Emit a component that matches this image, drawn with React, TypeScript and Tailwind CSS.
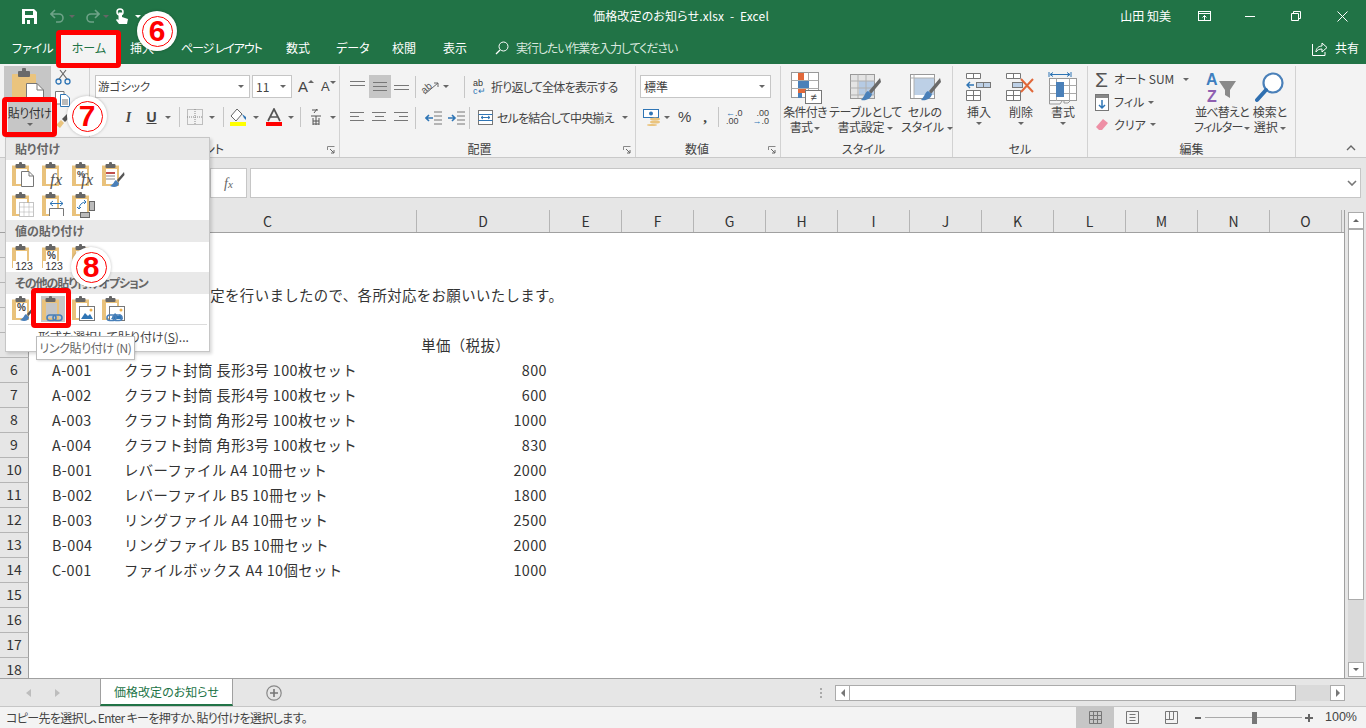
import React, { FC, ReactNode } from "react";

const UI = "font-['Noto_Sans_CJK_JP',sans-serif] [font-feature-settings:'palt']";

const Caret: FC<{ className?: string }> = ({ className = "" }) => (
  <span className={`inline-block h-0 w-0 border-x-[3px] border-t-[3px] border-x-transparent border-t-[#666] ${className}`} />
);

const Sep: FC<{ className?: string }> = ({ className = "h-[22px]" }) => <span className={`w-px bg-[#c6c6c6] ${className}`} />;

const Launcher = () => (
  <svg width="8" height="8" viewBox="0 0 8 8" className="absolute bottom-[3px] right-[4px]">
    <path d="M.5 4V.5H7.5" fill="none" stroke="#888" />
    <path d="M3 3l4 4M7 4v3H4" fill="none" stroke="#666" />
  </svg>
);

const Group: FC<{ w: string; label: string; labelPad?: string; launcher?: boolean; children: ReactNode }> = ({ w, label, labelPad = "", launcher, children }) => (
  <div className={`relative flex h-[91px] flex-col border-r border-[#d2d2d2] ${w}`}>
    <div className="h-[72px]">{children}</div>
    <div className={`mt-[3px] text-center text-[12px] leading-[16px] text-[#444] ${labelPad}`}>{label}</div>
    {launcher && <Launcher />}
  </div>
);

/* ---------- ribbon drawings ---------- */

const Lines: FC<{ rows: [number, number][]; y?: number }> = ({ rows, y = 0 }) => (
  <svg width="16" height="16" viewBox="0 0 16 16" style={{ marginTop: y }}>
    {rows.map(([x, len], i) => (
      <rect key={i} x={x} y={2 + i * 4} width={len} height="1" fill="#777" />
    ))}
  </svg>
);

const TableIcon: FC<{ kind: "cond" | "table" | "style" }> = ({ kind }) => (
  <svg width="34" height="34" viewBox="0 0 34 34">
    {kind === "cond" && (
      <>
        <rect x="2.5" y="1.5" width="27" height="25" fill="#fff" stroke="#999" />
        <path d="M2.5 9.5H29.5M2.5 17.5H29.5M10.5 1.5V27M19.5 1.5V27" stroke="#aaa" />
        <rect x="9" y="2" width="6" height="7" fill="#e1683a" />
        <rect x="9" y="10" width="11" height="7" fill="#4a80b9" />
        <rect x="9" y="18" width="8" height="4" fill="#e1683a" />
        <rect x="9" y="22" width="4" height="5" fill="#4a80b9" />
        <rect x="16.5" y="19.5" width="16" height="13" fill="#fff" stroke="#777" />
        <text x="24.5" y="30" textAnchor="middle" fontSize="11" fill="#444" fontFamily="Liberation Sans, sans-serif">≠</text>
      </>
    )}
    {kind === "table" && (
      <>
        <rect x="2.5" y="3.5" width="24" height="24" fill="#e4e4e4" stroke="#999" />
        <rect x="11" y="10" width="15" height="14" fill="#b6cbe4" />
        <path d="M2.5 10H27M2.5 17H27M2.5 24H27M10 3.5V27M18 3.5V27" stroke="#b0b0b0" />
        <path d="M32 7L21 20l2 3L33 11z" fill="#6a6a6a" />
        <path d="M20 20c-3 1-3 5-7 9 5 1 10-1 11-6z" fill="#4a80b9" />
      </>
    )}
    {kind === "style" && (
      <>
        <rect x="2.5" y="3.5" width="24" height="24" fill="#fff" stroke="#999" />
        <rect x="6" y="7" width="20" height="17" fill="#bdd0e6" />
        <path d="M2.5 7H27M6 3.5V27" stroke="#b0b0b0" />
        <path d="M32 7L21 20l2 3L33 11z" fill="#6a6a6a" />
        <path d="M20 20c-3 1-3 5-7 9 5 1 10-1 11-6z" fill="#4a80b9" />
      </>
    )}
  </svg>
);

const InsertIcon = () => (
  <svg width="28" height="30" viewBox="0 0 28 30">
    <path d="M1.5 2.5H15.5V7.5H1.5zM8.5 2.5V7.5M1.5 19.5H15.5V29.5H1.5zM1.5 24.5H15.5M8.5 19.5V29.5" fill="#fff" stroke="#777" />
    <rect x="11.5" y="11.5" width="14" height="5" fill="#bdd0e6" stroke="#777" />
    <path d="M18.5 11.5V16.5" stroke="#777" />
    <path d="M9 14H2M5 11l-3 3 3 3" fill="none" stroke="#2f75b5" strokeWidth="1.4" />
  </svg>
);

const DeleteIcon = () => (
  <svg width="32" height="30" viewBox="0 0 32 30">
    <path d="M1.5 2.5H15.5V7.5H1.5zM8.5 2.5V7.5M1.5 19.5H15.5V29.5H1.5zM1.5 24.5H15.5M8.5 19.5V29.5" fill="#fff" stroke="#777" />
    <rect x="7.5" y="11.5" width="10" height="5" fill="#bdd0e6" stroke="#777" />
    <path d="M16 8l12 13M28 8L16 21" stroke="#e1683a" strokeWidth="2" />
  </svg>
);

const FormatIcon = () => (
  <svg width="30" height="34" viewBox="0 0 30 34">
    <path d="M1 1V6M23 1V6M2 3.5H22M2 3.5l3-2M2 3.5l3 2M22 3.5l-3-2M22 3.5l-3 2" fill="none" stroke="#2f75b5" />
    <rect x="1.5" y="7.5" width="27" height="22" fill="#fff" stroke="#999" />
    <path d="M1.5 14.5H28.5M1.5 22.5H28.5M8.5 7.5V30M21.5 7.5V30" stroke="#aaa" />
    <rect x="8" y="11" width="8" height="15" fill="#4a80b9" />
    <path d="M1.5 30v3H12l2-3M16 30v2h4l2-2" fill="none" stroke="#999" />
  </svg>
);

const SortIcon = () => (
  <svg width="34" height="32" viewBox="0 0 34 32">
    <text x="1" y="14" fontSize="16" fontWeight="700" fill="#3f7fbf" fontFamily="Liberation Sans, sans-serif">A</text>
    <text x="2" y="31" fontSize="16" fontWeight="700" fill="#8e5fb0" fontFamily="Liberation Sans, sans-serif">Z</text>
    <path d="M14 10H31L25 19V27L20 24V19z" fill="#8a8a8a" />
  </svg>
);

const FindIcon = () => (
  <svg width="30" height="32" viewBox="0 0 30 32">
    <circle cx="18" cy="12" r="9.5" fill="#fff" stroke="#4a80b9" strokeWidth="2.2" />
    <path d="M11 19L2 29" stroke="#2f6fb0" strokeWidth="4" strokeLinecap="round" />
  </svg>
);

const PasteLarge = () => (
  <svg width="34" height="34" viewBox="0 0 34 34">
    <rect x="1" y="6" width="24" height="27" rx="1" fill="#eac47e" />
    <rect x="7" y="3" width="12" height="6" rx="1" fill="#6a6a6a" />
    <rect x="11" y="0" width="4" height="4" rx="1" fill="#6a6a6a" />
    <path d="M15.5 15.5H26l6.5 6.5V33.5H15.5z" fill="#fff" stroke="#777" />
    <path d="M26 15.5V22H32.5" fill="none" stroke="#777" />
  </svg>
);

/* ---------- paste menu drawings ---------- */

// tan frame with a pale inside, the clip sits on top
const Board: FC<{ children?: ReactNode; inner?: string }> = ({ children, inner = "#fff" }) => (
  <svg width="24" height="26" viewBox="0 0 24 26" className="overflow-visible">
    <path d="M1 3.5H18V24H1z" fill="#e9c27c" />
    <rect x="5" y="7" width="11" height="15" fill={inner} />
    <rect x="4.5" y="2" width="10" height="4" rx="1" fill="#666" />
    <rect x="8" y="0" width="3" height="3" rx="1" fill="#666" />
    {children}
  </svg>
);

const Brush = () => (
  <>
    <path d="M23 10l-7 8 1.5 2 6-7z" fill="#555" />
    <path d="M15 18c-2 1-2 4-6 6 4 2 9 1 9-3z" fill="#4a80b9" />
  </>
);

const Fx: FC<{ x?: number }> = ({ x = 9 }) => (
  <text x={x} y="23" fontSize="17" fontStyle="italic" fill="#555" fontFamily="Liberation Serif, serif">fx</text>
);

const Pic = () => (
  <>
    <rect x="8.5" y="10.5" width="15" height="14" fill="#fff" stroke="#777" />
    <path d="M10 23l4-6 3 3 2-2 3 5z" fill="#2f75b5" />
    <circle cx="20" cy="14" r="1.5" fill="#eeb04a" />
  </>
);

const Link = () => (
  <g fill="none" stroke="#4a80b9" strokeWidth="1.6">
    <rect x="6" y="19" width="9" height="5.5" rx="2.7" />
    <rect x="12" y="19" width="9" height="5.5" rx="2.7" />
  </g>
);

const Num: FC<{ pct?: boolean }> = ({ pct }) => (
  <>
    {pct && <text x="6" y="15" fontSize="10" fontWeight="700" fill="#444" fontFamily="Liberation Sans, sans-serif">%</text>}
    <rect x="2" y="17" width="22" height="9" fill="#fff" />
    <text x="13" y="26" textAnchor="middle" fontSize="10.5" fill="#333" fontFamily="Liberation Sans, sans-serif">123</text>
  </>
);

const MenuHead: FC<{ children: ReactNode; tight?: boolean }> = ({ children, tight }) => (
  <div className={`flex h-[22px] items-center whitespace-nowrap bg-[#e9e9e9] pl-[9px] text-[12px] font-bold text-[#666] ${tight ? "tracking-[-1px]" : ""}`}>{children}</div>
);

const IconRow: FC<{ children: ReactNode }> = ({ children }) => (
  <div className="flex h-[30px] items-center gap-[6px] pl-[5px]">{children}</div>
);

const PasteMenu = () => (
  <div className="absolute left-[5px] top-[137px] z-20 h-[215px] w-[205px] border border-[#c6c6c6] bg-white shadow-[2px_2px_3px_rgba(0,0,0,.15)]">
    <MenuHead>貼り付け</MenuHead>
    <IconRow>
      <Board>
        <path d="M10.5 9.5H18l4.5 4.5V24.5H10.5z" fill="#fff" stroke="#777" />
        <path d="M18 9.5V14H22.5" fill="none" stroke="#777" />
      </Board>
      <Board><Fx /></Board>
      <Board>
        <text x="6" y="15" fontSize="9" fontWeight="700" fill="#444" fontFamily="Liberation Sans, sans-serif">%</text>
        <Fx x={10} />
      </Board>
      <Board>
        <rect x="5" y="10" width="9" height="2" fill="#c0504d" />
        <path d="M5 14H14M5 17H14" stroke="#888" />
        <Brush />
      </Board>
    </IconRow>
    <IconRow>
      <Board>
        <rect x="8.5" y="10.5" width="14" height="14" fill="#fff" stroke="#888" strokeDasharray="1 1" />
        <path d="M8.5 15H22.5M8.5 20H22.5M13 10.5V24.5M18 10.5V24.5" stroke="#aaa" strokeDasharray="1 1" />
      </Board>
      <Board>
        <path d="M8.5 24V16.5H22.5V24" fill="#fff" stroke="#777" />
        <path d="M9 11.5H22M9 11.5l3-2.5M9 11.5l3 2.5M22 11.5l-3-2.5M22 11.5l-3 2.5" fill="none" stroke="#2f75b5" />
      </Board>
      <Board>
        <rect x="18.5" y="9.5" width="5" height="9" fill="#bbb" stroke="#666" />
        <rect x="9.5" y="20.5" width="9" height="5" fill="#bbb" stroke="#666" />
        <path d="M8 17c0-4 3-7 7-7M8 17l-2-2M8 17l2-2M15 10l-2-2M15 10l-2 2" fill="none" stroke="#2f75b5" />
      </Board>
    </IconRow>
    <MenuHead>値の貼り付け</MenuHead>
    <IconRow>
      <Board><Num /></Board>
      <Board><Num pct /></Board>
      <Board><Num /></Board>
    </IconRow>
    <MenuHead tight>その他の貼り付けオプション</MenuHead>
    <IconRow>
      <Board>
        <text x="6" y="15" fontSize="10" fontWeight="700" fill="#444" fontFamily="Liberation Sans, sans-serif">%</text>
        <Brush />
      </Board>
      <span className="flex h-[26px] w-[24px] bg-[#c6c6c6]">
        <Board inner="#c6c6c6"><Link /></Board>
      </span>
      <Board><Pic /></Board>
      <Board>
        <Pic />
        <Link />
      </Board>
    </IconRow>
    <div className="mx-[2px] h-px bg-[#dcdcdc]" />
    <div className="mt-[4px] pl-[32px] text-[12px] leading-[16px] text-[#444]">
      形式を選択して貼り付け(<span className="underline">S</span>)...
    </div>
  </div>
);

/* ---------- overlays ---------- */

const Callout: FC<{ n: string; pos: string }> = ({ n, pos }) => (
  <div className={`absolute z-40 flex h-[40px] w-[40px] items-center justify-center rounded-full bg-white shadow-[0_0_3px_rgba(0,0,0,.25)] ${pos}`}>
    <div className="flex h-[31px] w-[31px] items-center justify-center rounded-full border border-[#f00] font-['Liberation_Sans',sans-serif] text-[30px] font-bold leading-none text-[#f00]">
      {n}
    </div>
  </div>
);

/* ---------- sheet data ---------- */

const ROWS: Record<number, [string, string, string]> = {
  5: ["", "", "単価（税抜）"],
  6: ["A-001", "クラフト封筒 長形3号 100枚セット", "800"],
  7: ["A-002", "クラフト封筒 長形4号 100枚セット", "600"],
  8: ["A-003", "クラフト封筒 角形2号 100枚セット", "1000"],
  9: ["A-004", "クラフト封筒 角形3号 100枚セット", "830"],
  10: ["B-001", "レバーファイル A4 10冊セット", "2000"],
  11: ["B-002", "レバーファイル B5 10冊セット", "1800"],
  12: ["B-003", "リングファイル A4 10冊セット", "2500"],
  13: ["B-004", "リングファイル B5 10冊セット", "2000"],
  14: ["C-001", "ファイルボックス A4 10個セット", "1000"],
};

const COLS = ["E", "F", "G", "H", "I", "J", "K", "L", "M", "N", "O"];
const ROW_NOS = Array.from({ length: 18 }, (_, i) => i + 1);
const TABS = [
  ["挿入", "w-[62px] pl-[11px]"],
  ["ページ レイアウト", "w-[105px] tracking-[-1.1px]"],
  ["数式", "w-[50px]"],
  ["データ", "w-[56px]"],
  ["校閲", "w-[51px]"],
  ["表示", "w-[52px]"],
];

export default function App() {
  return (
    <div className={`relative flex h-[728px] w-[1366px] flex-col overflow-hidden bg-white ${UI}`}>
      {/* title bar */}
      <div className="grid h-[32px] grid-cols-[1fr_auto_1fr] items-center bg-[#217346] text-white">
        <div className="flex items-center pl-[22px]">
          <svg width="15" height="15" viewBox="0 0 15 15">
            <path d="M0 0H12L15 3V15H0z" fill="#fff" />
            <rect x="3" y="2" width="8" height="4" fill="#217346" />
            <rect x="3" y="9" width="9" height="6" fill="#217346" />
            <rect x="5" y="11" width="3" height="4" fill="#fff" />
          </svg>
          <svg width="16" height="14" viewBox="0 0 16 14" className="ml-[13px]">
            <path d="M5 1L1 5l4 4M1 5h8a4 4 0 010 8H6" fill="none" stroke="#6ea388" strokeWidth="1.6" />
          </svg>
          <Caret className="ml-[3px] border-t-[#6ea388]" />
          <svg width="16" height="14" viewBox="0 0 16 14" className="ml-[9px]">
            <path d="M11 1l4 4-4 4M15 5H7a4 4 0 000 8h3" fill="none" stroke="#6ea388" strokeWidth="1.6" />
          </svg>
          <Caret className="ml-[3px] border-t-[#6ea388]" />
          <svg width="14" height="17" viewBox="0 0 14 17" className="ml-[6px]">
            <circle cx="5" cy="4" r="3" fill="none" stroke="#fff" strokeWidth="1.5" />
            <path d="M3.5 4.5V12L2 11l-1 1 3 4h8l1-5-6-2V4.5z" fill="#fff" />
          </svg>
          <Caret className="ml-[6px] border-t-white" />
        </div>
        <div className="mr-[4px] whitespace-pre text-[12px] leading-none tracking-[0.15px]">価格改定のお知らせ.xlsx  -  Excel</div>
        <div className="flex items-center justify-end">
          <span className="mr-[27px] text-[12px]">山田 知美</span>
          <svg width="14" height="11" viewBox="0 0 14 11" className="mr-[33px]">
            <rect x=".5" y=".5" width="12" height="9" fill="none" stroke="#fff" />
            <path d="M1 2.5H12M6.5 9V4.5M4.5 6.5l2-2 2 2" fill="none" stroke="#fff" />
          </svg>
          <span className="mr-[36px] h-px w-[10px] bg-white" />
          <svg width="10" height="10" viewBox="0 0 10 10" className="mr-[36px]">
            <path d="M.5 2.5H7.5V9.5H.5zM2.5 2.5V.5H9.5V7.5H7.5" fill="none" stroke="#fff" />
          </svg>
          <svg width="11" height="11" viewBox="0 0 11 11" className="mr-[18px]">
            <path d="M.5.5l10 10M10.5.5l-10 10" stroke="#fff" />
          </svg>
        </div>
      </div>

      {/* tabs */}
      <div className="flex h-[32px] items-center bg-[#217346] text-[12px] text-white">
        <span className="w-[59px] pl-[12px]">ファイル</span>
        <span className="flex h-full w-[60px] items-center justify-center bg-[#f3f3f3] text-[#217346]">ホーム</span>
        {TABS.map(([t, w]) => (
          <span key={t} className={`${w} whitespace-nowrap`}>{t}</span>
        ))}
        <svg width="14" height="14" viewBox="0 0 14 14">
          <circle cx="8.5" cy="5.5" r="4.5" fill="none" stroke="#fff" />
          <path d="M5 9l-4 4" stroke="#fff" strokeWidth="1.3" />
        </svg>
        <span className="ml-[7px] whitespace-nowrap tracking-[-1.1px] text-[#d9e8df]">実行したい作業を入力してください</span>
        <div className="ml-auto flex items-center pr-[7px]">
          <svg width="16" height="15" viewBox="0 0 16 15" className="mr-[7px]">
            <path d="M.5 3V14.5H13V11" fill="none" stroke="#fff" />
            <path d="M4 11c0-4 3-6 6-6V2l5 4.5L10 11V8c-3 0-5 1-6 3z" fill="none" stroke="#fff" />
          </svg>
          <span>共有</span>
        </div>
      </div>

      {/* ribbon */}
      <div className="flex h-[94px] shrink-0 border-b border-[#c9c9c9] bg-[#f3f3f3] pt-[2px] text-[12px] text-[#444]">
        <Group w="w-[90px]" label="">
          <div className="flex pl-[4px]">
            <div className="flex h-[34px] w-[47px] items-start justify-center bg-[#c6c6c6] pt-[2px]"><PasteLarge /></div>
            <div className="ml-[4px] flex flex-col gap-[6px] pt-[3px]">
              <svg width="16" height="16" viewBox="0 0 16 16">
                <circle cx="3.5" cy="12.5" r="2.5" fill="none" stroke="#2f75b5" strokeWidth="1.3" />
                <circle cx="12.5" cy="12.5" r="2.5" fill="none" stroke="#2f75b5" strokeWidth="1.3" />
                <path d="M4 10L11 1M12 10L5 1" stroke="#666" strokeWidth="1.2" />
              </svg>
              <svg width="15" height="16" viewBox="0 0 15 16">
                <path d="M.5.5H9V13H.5z" fill="#fff" stroke="#777" />
                <path d="M5.5 3.5H11l3.5 3.5V15.5H5.5z" fill="#fff" stroke="#2f75b5" />
                <path d="M7 9H13M7 11H13M7 13H13" stroke="#777" />
              </svg>
              <svg width="16" height="16" viewBox="0 0 16 16">
                <path d="M1 12l5-5 3 3-4 5z" fill="#eac47e" />
                <path d="M7 6l5-5 3 3-5 5z" fill="#555" />
              </svg>
            </div>
          </div>
        </Group>

        <Group w="w-[250px]" label="フォント" labelPad="pr-[20px]" launcher>
          <div className="flex items-center pl-[5px] pt-[9px]">
            <div className="flex h-[23px] w-[155px] items-center justify-between border border-[#c6c6c6] bg-white px-[2px] text-[11.5px]">
              游ゴシック<Caret className="mr-[3px]" />
            </div>
            <div className="ml-[2px] flex h-[23px] w-[40px] items-center justify-between border border-[#c6c6c6] bg-white px-[3px] text-[12px]">
              11<Caret className="mr-[2px]" />
            </div>
            <span className="ml-[6px] flex w-[16px] items-start font-['Liberation_Sans',sans-serif] text-[15px] leading-none">
              A<Caret className="mt-[1px] rotate-180 border-t-[#2f75b5]" />
            </span>
            <span className="ml-[7px] flex w-[16px] items-start font-['Liberation_Sans',sans-serif] text-[13px] leading-none">
              A<Caret className="mt-[1px] border-t-[#2f75b5]" />
            </span>
          </div>
          <div className="mt-[8px] flex h-[22px] items-center pl-[27px] font-['Liberation_Serif',serif] text-[14px] text-[#444]">
            <i className="w-[23px] text-center font-semibold">I</i>
            <span className="w-[23px] text-center font-['Liberation_Sans',sans-serif] font-bold underline">U</span>
            <Caret className="ml-[2px]" />
            <Sep className="ml-[8px] h-[20px]" />
            <svg width="16" height="16" viewBox="0 0 16 16" className="ml-[7px]">
              <rect x=".5" y=".5" width="15" height="15" fill="none" stroke="#888" strokeDasharray="1 1" />
              <path d="M0 8H16M8 0V16" stroke="#888" strokeDasharray="1 1" />
            </svg>
            <Caret className="ml-[6px]" />
            <Sep className="ml-[8px] h-[20px]" />
            <svg width="18" height="18" viewBox="0 0 18 18" className="ml-[6px]">
              <path d="M7 1L1 8l5 5 6-7z" fill="#fff" stroke="#666" />
              <path d="M12 6l4 3v3l-2-2z" fill="#2f75b5" />
              <rect x="0" y="14" width="16" height="4" fill="#ffff00" />
            </svg>
            <Caret className="ml-[5px]" />
            <svg width="16" height="18" viewBox="0 0 16 18" className="ml-[7px]">
              <path d="M2 13L8 1l6 12M4.5 9H11.5" fill="none" stroke="#555" strokeWidth="1.7" />
              <rect x="0" y="14" width="16" height="4" fill="#ff0000" />
            </svg>
            <Caret className="ml-[6px]" />
            <Sep className="ml-[6px] h-[20px]" />
            <svg width="12" height="18" viewBox="0 0 12 18" className="ml-[9px]">
              <path d="M2 2h6M7 1L4 5M1 8h10M3 10v7M9 10v7M3 13h6M3 16h6M6 8v9" fill="none" stroke="#555" />
            </svg>
            <Caret className="ml-[8px]" />
          </div>
        </Group>

        <Group w="w-[296px]" label="配置" labelPad="pr-[16px]" launcher>
          <div className="box-content flex h-[23px] items-center pl-[7px] pt-[9px]">
            <span className="flex w-[22px] justify-center"><Lines rows={[[0, 15], [0, 15]]} /></span>
            <span className="flex h-[23px] w-[22px] items-center justify-center bg-[#c6c6c6]"><Lines rows={[[1, 14], [1, 14], [1, 14]]} y={2} /></span>
            <span className="flex w-[22px] justify-center"><Lines rows={[[0, 15], [0, 15]]} y={8} /></span>
            <Sep className="ml-[2px] h-[22px]" />
            <svg width="18" height="18" viewBox="0 0 18 18" className="ml-[5px]">
              <text x="0" y="13" fontSize="10" fill="#555" transform="rotate(-40 6 10)" fontFamily="Liberation Sans, sans-serif">ab</text>
              <path d="M4 16L17 5M17 5h-4M17 5v4" fill="none" stroke="#666" />
            </svg>
            <Caret className="ml-[4px]" />
            <Sep className="ml-[15px] h-[22px]" />
            <span className="ml-[8px] flex w-[18px] flex-col font-['Liberation_Sans',sans-serif] text-[9px] leading-[8px] text-[#333]">
              <span>ab</span><span className="text-[#2f75b5]">c↵</span>
            </span>
            <span className="whitespace-nowrap tracking-[-0.75px]">折り返して全体を表示する</span>
          </div>
          <div className="mt-[8px] flex h-[23px] items-center pl-[7px]">
            <span className="flex w-[22px] justify-center"><Lines rows={[[0, 14], [0, 9], [0, 14]]} /></span>
            <span className="flex w-[22px] justify-center"><Lines rows={[[0, 14], [3, 9], [0, 14]]} /></span>
            <span className="flex w-[22px] justify-center"><Lines rows={[[0, 14], [5, 9], [0, 14]]} /></span>
            <Sep className="ml-[2px] h-[22px]" />
            <svg width="17" height="14" viewBox="0 0 17 14" className="ml-[9px]">
              <path d="M9 1H17M9 5H17M9 9H17M9 13H17M0 1H0" stroke="#777" />
              <path d="M8 7H1M4 4L1 7l3 3" fill="none" stroke="#2f75b5" strokeWidth="1.6" />
            </svg>
            <svg width="17" height="14" viewBox="0 0 17 14" className="ml-[6px]">
              <path d="M9 1H17M9 5H17M9 9H17M9 13H17" stroke="#777" />
              <path d="M0 7H7M4 4l3 3-3 3" fill="none" stroke="#2f75b5" strokeWidth="1.6" />
            </svg>
            <Sep className="ml-[4px] h-[22px]" />
            <svg width="16" height="16" viewBox="0 0 16 16" className="ml-[8px]">
              <rect x=".5" y=".5" width="14" height="14" fill="#fff" stroke="#777" />
              <path d="M.5 4.5H14.5M.5 10.5H14.5M3 7.5H12M3 7.5l2-1.5M3 7.5l2 1.5M12 7.5l-2-1.5M12 7.5l-2 1.5" fill="none" stroke="#2f75b5" />
            </svg>
            <span className="ml-[3px] whitespace-nowrap tracking-[-0.8px]">セルを結合して中央揃え</span>
            <Caret className="ml-[8px]" />
          </div>
        </Group>

        <Group w="w-[145px]" label="数値" labelPad="pr-[22px]" launcher>
          <div className="pl-[4px] pt-[9px]">
            <div className="flex h-[23px] w-[131px] items-center justify-between border border-[#c6c6c6] bg-white px-[3px]">
              標準<Caret className="mr-[2px]" />
            </div>
          </div>
          <div className="mt-[8px] flex h-[22px] items-center pl-[7px]">
            <svg width="18" height="18" viewBox="0 0 18 18">
              <rect x=".5" y="1.5" width="15" height="8" fill="#fff" stroke="#2f75b5" />
              <circle cx="8" cy="5.5" r="2" fill="#2f75b5" />
              <ellipse cx="12" cy="11" rx="5" ry="1.5" fill="#eac47e" />
              <ellipse cx="12" cy="14" rx="5" ry="1.5" fill="#eac47e" />
              <ellipse cx="9" cy="17" rx="5" ry="1" fill="#eac47e" />
            </svg>
            <Caret className="ml-[3px]" />
            <span className="ml-[8px] font-['Liberation_Sans',sans-serif] text-[15px]">%</span>
            <span className="ml-[12px] font-['Liberation_Serif',serif] text-[15px] font-bold leading-none">,</span>
            <Sep className="ml-[11px] h-[20px]" />
            <span className="ml-[7px] w-[20px] font-['Liberation_Sans',sans-serif] text-[9px] leading-[8px]">
              <span className="text-[#2f75b5]">←</span>.0<br />.00
            </span>
            <span className="ml-[3px] w-[20px] text-right font-['Liberation_Sans',sans-serif] text-[9px] leading-[8px]">
              .00<br /><span className="text-[#2f75b5]">→</span>.0
            </span>
          </div>
        </Group>

        <Group w="w-[172px]" label="スタイル" labelPad="pr-[6px]">
          <div className="flex pt-[5px] text-center leading-[15px]">
            <div className="w-[48px]">
              <div className="flex h-[33px] justify-center pl-[2px]"><TableIcon kind="cond" /></div>
              <div className="whitespace-nowrap tracking-[-0.7px]">条件付き<br />書式 <Caret className="align-middle" /></div>
            </div>
            <div className="w-[72px]">
              <div className="flex h-[33px] justify-center"><TableIcon kind="table" /></div>
              <div className="whitespace-nowrap tracking-[-0.3px]">テーブルとして<br />書式設定 <Caret className="align-middle" /></div>
            </div>
            <div className="w-[48px]">
              <div className="flex h-[33px] justify-center"><TableIcon kind="style" /></div>
              <div className="whitespace-nowrap">セルの<br />スタイル <Caret className="align-middle" /></div>
            </div>
          </div>
        </Group>

        <Group w="w-[135px]" label="セル">
          <div className="flex pl-[5px] pt-[5px] text-center leading-[15px]">
            {[
              ["挿入", <InsertIcon key="i" />],
              ["削除", <DeleteIcon key="d" />],
              ["書式", <FormatIcon key="f" />],
            ].map(([t, icon]) => (
              <div key={t as string} className="w-[42px]">
                <div className="flex h-[33px] justify-center">{icon}</div>
                <div>{t}</div>
                <div className="mt-[3px] flex justify-center"><Caret className="align-top" /></div>
              </div>
            ))}
          </div>
        </Group>

        <Group w="w-[208px]" label="編集">
          <div className="flex">
            <div className="w-[106px] pl-[7px] pt-[1px]">
              <div className="flex h-[24px] items-center">
                <span className="w-[19px] font-['Liberation_Sans',sans-serif] text-[21px] leading-none text-[#555]">Σ</span>
                オート SUM<Caret className="ml-[9px]" />
              </div>
              <div className="flex h-[22px] items-center">
                <svg width="14" height="17" viewBox="0 0 14 17" className="mr-[5px]">
                  <rect x=".5" y=".5" width="13" height="16" fill="#fff" stroke="#777" />
                  <rect x="1" y="1" width="12" height="3" fill="#888" />
                  <path d="M7 6v8M4 11l3 3 3-3" fill="none" stroke="#2f75b5" strokeWidth="1.5" />
                </svg>
                フィル<Caret className="ml-[4px]" />
              </div>
              <div className="flex h-[23px] items-center">
                <svg width="14" height="14" viewBox="0 0 14 14" className="mr-[5px]">
                  <path d="M8 1l5 4-6 7H4L1 9z" fill="#ee8fa5" />
                </svg>
                クリア<Caret className="ml-[4px]" />
              </div>
            </div>
            <div className="flex pt-[5px] text-center leading-[15px]">
              <div className="w-[56px]">
                <div className="flex h-[33px] justify-center"><SortIcon /></div>
                <div className="whitespace-nowrap tracking-[-0.8px]">並べ替えと<br />フィルター <Caret className="align-middle" /></div>
              </div>
              <div className="w-[40px]">
                <div className="flex h-[33px] justify-center"><FindIcon /></div>
                <div className="whitespace-nowrap">検索と<br />選択 <Caret className="align-middle" /></div>
              </div>
            </div>
          </div>
        </Group>

        <div className="relative flex-1">
          <svg width="10" height="6" viewBox="0 0 10 6" className="absolute bottom-[6px] right-[10px]">
            <path d="M1 5l4-4 4 4" fill="none" stroke="#666" strokeWidth="1.4" />
          </svg>
        </div>
      </div>

      {/* formula bar */}
      <div className="flex h-[52px] shrink-0 items-center bg-[#e6e6e6] pb-[12px] pt-[10px]">
        <div className="ml-[210px] flex h-[30px] w-[37px] items-center justify-center border border-[#c6c6c6] bg-white font-['Liberation_Serif',serif] text-[14px] italic text-[#666]">
          <span>f<span className="text-[11px]">x</span></span>
        </div>
        <div className="ml-[3px] flex h-[30px] w-[1111px] items-center justify-end border border-[#c6c6c6] bg-white pr-[3px]">
          <svg width="10" height="6" viewBox="0 0 10 6">
            <path d="M1 1l4 4 4-4" fill="none" stroke="#777" strokeWidth="1.6" />
          </svg>
        </div>
      </div>

      {/* sheet */}
      <div className="flex h-[468px] shrink-0 bg-[#e6e6e6] font-['Noto_Sans_CJK_JP',sans-serif] [font-feature-settings:normal]">
        <div className="w-[1345px] shrink-0 border-r border-[#a0a0a0]">
          <div className="flex h-[23px] border-b border-[#a0a0a0] text-[14px] leading-[22px] text-[#333]">
            <span className="w-[29px] shrink-0" />
            <span className="w-[15px] shrink-0" />
            <span className="w-[73px] shrink-0 border-r border-[#b5b5b5] text-center">B</span>
            <span className="w-[300px] shrink-0 border-r border-[#b5b5b5] pl-[2px] text-center">C</span>
            <span className="w-[133px] shrink-0 border-r border-[#b5b5b5] text-center">D</span>
            {COLS.map((c) => (
              <span key={c} className="w-[72px] shrink-0 border-r border-[#b5b5b5] text-center">{c}</span>
            ))}
          </div>
          <div className="h-[445px] overflow-hidden bg-white">
            {ROW_NOS.map((n) => {
              const row = ROWS[n];
              return (
                <div key={n} className="flex h-[25px] text-[14.4px] leading-[23px] tracking-[0.4px] text-[#333]">
                  <span className="w-[29px] shrink-0 border-b border-r border-[#b5b5b5] border-r-[#a0a0a0] bg-[#e6e6e6] text-center text-[14px] leading-[23px] tracking-normal">{n}</span>
                  {n === 3 ? (
                    <span className="whitespace-nowrap pl-[19px]">下記商品について価格改定を行いましたので、各所対応をお願いいたします。</span>
                  ) : row ? (
                    <>
                      <span className="w-[95px] shrink-0 pl-[23px]">{row[0]}</span>
                      <span className="w-[293px] shrink-0 whitespace-nowrap">{row[1]}</span>
                      <span className={`w-[133px] shrink-0 text-right ${n === 5 ? "pr-[40px]" : "pr-[3px]"}`}>{row[2]}</span>
                    </>
                  ) : null}
                </div>
              );
            })}
          </div>
        </div>
        <div className="flex w-[21px] flex-col items-center pb-[1px] pt-[2px]">
          <div className="flex h-[17px] w-[16px] items-center justify-center border border-[#ababab] bg-white">
            <Caret className="rotate-180" />
          </div>
          <div className="h-[371px] w-[16px] border border-[#ababab] bg-white" />
          <div className="w-[16px] flex-1 bg-[#dadada]" />
          <div className="flex h-[15px] w-[16px] items-center justify-center border border-[#ababab] bg-white">
            <Caret />
          </div>
        </div>
      </div>

      {/* sheet tabs */}
      <div className="flex h-[28px] shrink-0 items-center border-t border-[#a0a0a0] bg-[#e6e6e6] text-[#b5b5b5]">
        <span className="ml-[26px] h-0 w-0 border-y-[4px] border-r-[5px] border-y-transparent border-r-[#bdbdbd]" />
        <span className="ml-[24px] h-0 w-0 border-y-[4px] border-l-[5px] border-y-transparent border-l-[#bdbdbd]" />
        <div className="ml-[40px] mt-[-1px] flex h-[27px] w-[133px] items-center justify-center border-x border-b-[2px] border-x-[#a0a0a0] border-b-[#217346] bg-white pt-[1px] text-[12px] text-[#217346]">
          価格改定のお知らせ
        </div>
        <svg width="16" height="16" viewBox="0 0 16 16" className="ml-[33px]">
          <circle cx="8" cy="8" r="7.2" fill="none" stroke="#888" strokeWidth="1.2" />
          <path d="M8 4V12M4 8H12" stroke="#777" strokeWidth="1.6" />
        </svg>
        <span className="ml-[538px] flex flex-col gap-[2px]">
          <i className="h-[2px] w-[2px] bg-[#aaa]" />
          <i className="h-[2px] w-[2px] bg-[#aaa]" />
          <i className="h-[2px] w-[2px] bg-[#aaa]" />
        </span>
        <div className="ml-[13px] flex h-[16px] w-[510px] items-stretch">
          <span className="flex w-[15px] items-center justify-center border border-[#ababab] bg-white">
            <span className="h-0 w-0 border-y-[4px] border-r-[4px] border-y-transparent border-r-[#777]" />
          </span>
          <span className="w-[446px] border-y border-r border-[#ababab] bg-white" />
          <span className="flex-1 bg-[#dadada]" />
          <span className="flex w-[15px] items-center justify-center border border-[#ababab] bg-white">
            <span className="h-0 w-0 border-y-[4px] border-l-[4px] border-y-transparent border-l-[#777]" />
          </span>
        </div>
      </div>

      {/* status bar */}
      <div className="flex h-[22px] shrink-0 items-center border-t border-[#c6c6c6] bg-[#f3f3f3] text-[12px] text-[#444]">
        <span className="ml-[6px] whitespace-nowrap tracking-[-0.65px]">コピー先を選択し、Enter キーを押すか、貼り付けを選択します。</span>
        <div className="ml-auto flex h-full items-center">
          <span className="flex h-full w-[38px] items-center justify-center bg-[#c6c6c6]">
            <svg width="13" height="13" viewBox="0 0 13 13">
              <path d="M.5.5H12.5V12.5H.5zM.5 4.5H12.5M.5 8.5H12.5M4.5.5V12.5M8.5.5V12.5" fill="none" stroke="#777" />
            </svg>
          </span>
          <svg width="13" height="13" viewBox="0 0 13 13" className="ml-[12px]">
            <path d="M.5.5H12.5V12.5H.5zM3.5 3.5H9.5M3.5 6.5H9.5M3.5 9.5H9.5" fill="none" stroke="#777" />
          </svg>
          <svg width="13" height="13" viewBox="0 0 13 13" className="ml-[26px]">
            <path d="M.5.5H12.5V12.5H.5zM.5 8.5H8.5V.5M4.5.5V8.5" fill="none" stroke="#777" />
          </svg>
          <span className="ml-[17px] h-[2px] w-[6px] bg-[#666]" />
          <span className="relative ml-[4px] flex h-[1px] w-[97px] items-center bg-[#aaa]">
            <i className="absolute left-[47px] h-[12px] w-[5px] bg-[#777]" />
          </span>
          <svg width="8" height="8" viewBox="0 0 8 8" className="ml-[3px]">
            <path d="M0 4H8M4 0V8" stroke="#666" strokeWidth="2" />
          </svg>
          <span className="ml-[12px] mr-[9px] font-['Liberation_Sans',sans-serif] text-[12.5px]">100%</span>
        </div>
      </div>

      {/* paste menu and annotations */}
      <div className="absolute left-[8px] top-[100px] z-10 flex h-[33px] w-[43px] flex-col items-center bg-[#c6c6c6] pt-[5px] text-[12px] leading-[16px] text-[#333]">
        <span className="whitespace-nowrap tracking-[-0.5px]">貼り付け</span>
        <Caret className="mt-[2px]" />
      </div>
      <PasteMenu />
      <div className="absolute left-[36px] top-[336px] z-30 flex h-[24px] w-[99px] items-center justify-center whitespace-nowrap border border-[#bbb] bg-white text-[12px] tracking-[-0.4px] text-[#666] shadow-[1px_1px_2px_rgba(0,0,0,.12)]">
        リンク貼り付け (N)
      </div>
      <div className="absolute left-[56px] top-[30px] z-30 h-[38px] w-[65px] rounded-[4px] border-[5px] border-[#f00]" />
      <div className="absolute left-[2px] top-[97px] z-30 h-[40px] w-[55px] rounded-[4px] border-[5px] border-[#f00]" />
      <div className="absolute left-[31px] top-[288px] z-30 h-[40px] w-[40px] rounded-[4px] border-[5px] border-[#f00]" />
      <Callout n="6" pos="left-[137px] top-[11px]" />
      <Callout n="7" pos="left-[67px] top-[96px]" />
      <Callout n="8" pos="left-[71px] top-[247px]" />
    </div>
  );
}
